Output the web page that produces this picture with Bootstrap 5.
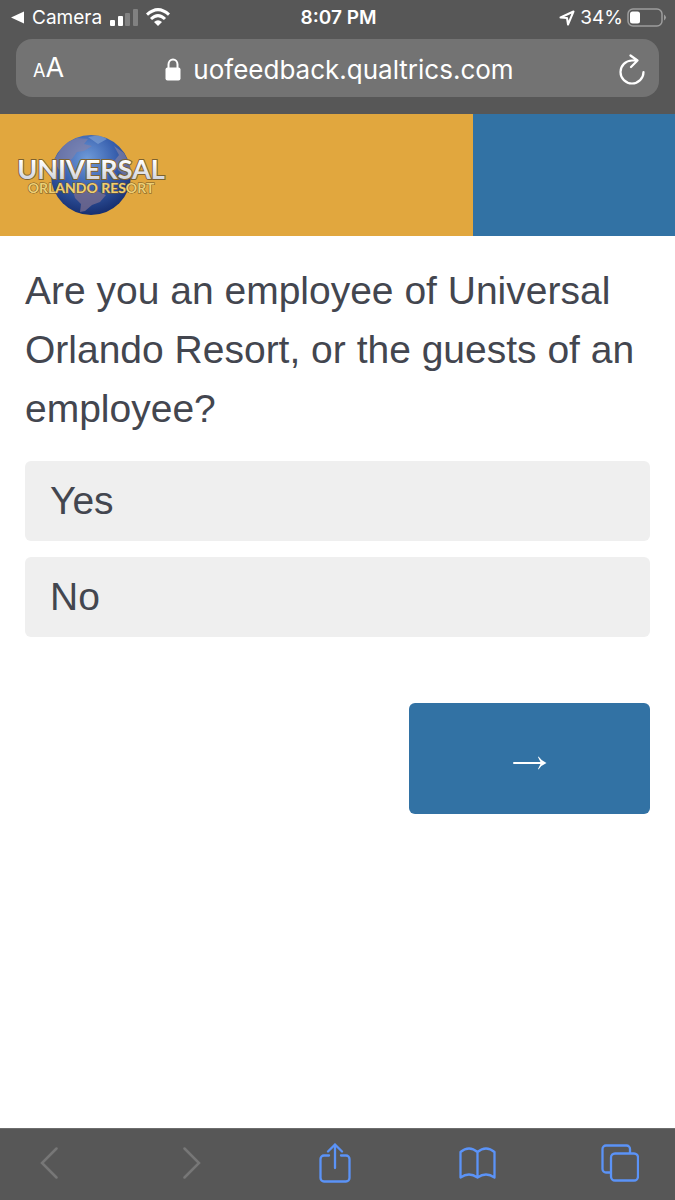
<!DOCTYPE html>
<html lang="en">
<head>
<meta charset="utf-8">
<meta name="viewport" content="width=device-width, initial-scale=1">
<title>Universal Orlando Resort Feedback</title>
<link href="https://cdn.jsdelivr.net/npm/bootstrap@5.3.0/dist/css/bootstrap.min.css" rel="stylesheet">
<style>
  body { font-family: "Liberation Sans", Arial, sans-serif; color: #43464f; background: #fff; }
  svg { display: block; flex: none; }
  .chrome { background: #575757; color: #fff; font-family: Inter, sans-serif; }
  .chrome a, .chrome button { color: inherit; text-decoration: none; }
  .plain { border: 0; background: none; padding: 0; }
  .status { height: 39px; padding: 0 8px 4px 10px; font-size: 19px; line-height: 24px; }
  .address { height: 58px; margin: 0 16px 17px; padding: 3px 13px 0 17px; border-radius: 16px; background: #737373; }
  .side { width: 36px; }
  .host { font-size: 26px; line-height: 36px; }
  .small-a { font-size: 18px; }
  .big-a { font-size: 27px; }
  .size-btn { line-height: 32px; }
  .banner { height: 122px; background: #3272a4; }
  .banner-brand { width: 70%; padding: 0 16px; background: #e1a73e; }
  .survey { padding: 25px 25px 24px; }
  .question { font-size: 39px; line-height: 59px; margin-bottom: 23px; }
  .choice { display: block; padding: 10px 25px 11px; border-radius: 6px; background: #efefef; font-size: 39px; line-height: 59px; cursor: pointer; }
  .btn-check:checked + .choice { background: #3272a4; color: #fff; }
  .btn-check:focus-visible + .choice { outline: 2px solid #3272a4; }
  .next { width: 241px; height: 111px; margin-top: 66px; padding: 8px 0 0; border: 0; border-radius: 6px; background: #3272a4; color: #fff; }
  .toolbar { height: 72px; padding: 0 36px 3px 30px; border-top: 1px solid #6d6d6d; }
  .toolbar button { width: 38px; height: 40px; color: #5b93f7; }
  .toolbar button:disabled { color: #777; }
</style>
</head>
<body class="d-flex flex-column min-vh-100">
<header class="chrome">
  <div class="status row g-0 align-items-center">
    <div class="col-4 d-flex align-items-center">
      <a href="#" class="d-flex align-items-center gap-2">
        <svg width="14" height="13" viewBox="0 0 14 13"><path d="M1 6.500 14 .5V12.500Z" fill="#fff"/></svg>
        <span>Camera</span>
      </a>
      <svg class="ms-2" width="28" height="18" viewBox="0 0 28 18" aria-label="Signal"><g fill="#fff"><rect y="11" width="5" height="6" rx="1"/><rect x="8" y="7" width="5" height="10" rx="1"/><g opacity=".25"><rect x="15" y="4" width="5" height="13" rx="1"/><rect x="23" width="5" height="17" rx="1"/></g></g></svg>
      <svg class="ms-2" width="24" height="19" viewBox="0 0 24 19" aria-label="Wi-Fi"><g fill="none" stroke="#fff" stroke-width="3"><path d="M1 6.700Q12-3.500 23 6.700"/><path d="M5 11Q12 4.300 19 11"/></g><path d="M8 14Q12 10.500 16 14L12 18Z" fill="#fff"/></svg>
    </div>
    <div class="col-4 text-center fw-semibold">8:07 PM</div>
    <div class="col-4 d-flex align-items-center justify-content-end gap-1">
      <svg width="17" height="16" viewBox="0 0 17 16"><path d="M1.500 7.500 14.500 1.500 9 14.500 8 8Z" fill="none" stroke="#fff" stroke-width="2" stroke-linejoin="round"/></svg>
      <span>34%</span>
      <svg width="40" height="20" viewBox="0 0 40 20" aria-label="Battery"><rect x="1" y="1" width="34" height="17" rx="5" fill="none" stroke="#9d9d9d" stroke-width="1.500"/><rect x="3" y="3.500" width="10" height="12" rx="2.500" fill="#fff"/><path d="M37 6.500Q41 9.500 37 12.500Z" fill="#9d9d9d"/></svg>
    </div>
  </div>
  <div class="address d-flex align-items-center justify-content-between">
    <button class="plain size-btn side text-nowrap text-start" type="button" aria-label="Text size"><span class="small-a">A</span><span class="big-a">A</span></button>
    <div class="d-flex align-items-center gap-2">
      <svg class="me-1" width="16" height="23" viewBox="0 0 16 23"><path d="M3.500 11V6.500a4.500 5 0 0 1 9 0V11" fill="none" stroke="#fff" stroke-width="2"/><rect x=".5" y="9.500" width="15" height="13" rx="2" fill="#fff"/></svg>
      <span class="host">uofeedback.qualtrics.com</span>
    </div>
    <button class="plain side d-flex justify-content-end" type="button" aria-label="Reload">
      <svg width="28" height="32" viewBox="0 0 28 32" fill="none" stroke="#fff" stroke-width="2.200" stroke-linecap="round" stroke-linejoin="round"><path d="M25.500 18A11.500 11.500 0 1 1 14 6.500h5.500M12.500 1.500l7 5-6.500 6.500"/></svg>
    </button>
  </div>
</header>

<div class="banner d-flex">
  <div class="banner-brand d-flex align-items-center">
    <svg width="152" height="82" viewBox="0 0 152 82" role="img" aria-label="Universal Orlando Resort">
      <defs>
        <radialGradient id="globe" cx=".45" cy=".3" r=".7"><stop offset="0" stop-color="#6f9bd9"/><stop offset=".5" stop-color="#3a62b0"/><stop offset="1" stop-color="#172f70"/></radialGradient>
        <linearGradient id="silver" x1="0" y1="0" x2="0" y2="1"><stop offset=".25" stop-color="#fff"/><stop offset="1" stop-color="#c5c8d3"/></linearGradient>
        <clipPath id="disc"><circle cx="75" cy="41" r="40"/></clipPath>
      </defs>
      <circle cx="75" cy="41" r="40" fill="url(#globe)"/>
      <g clip-path="url(#disc)">
        <path d="M38 26 48 10 61 4 72 5 68 10 76 12 68 17 61 18 56 25 49 28 43 36Z" fill="#8981a3" opacity=".6"/>
        <path d="M72 3 84 1 91 5 82 10Z" fill="#86a7d6" opacity=".6"/>
        <path d="M98 12 108 19 115 33 111 44 102 36 99 26 103 21Z" fill="#8c86a3" opacity=".6"/>
        <path d="M57 57 68 55 81 57 90 61 84 68 76 71 69 77 64 78 65 70 59 64Z" fill="#756b8e" opacity=".8"/>
      </g>
      <g font-family="Lato, sans-serif" text-anchor="middle">
        <text x="75" y="45" font-size="27" font-weight="700" fill="url(#silver)" stroke="#7d6230" stroke-width="2" paint-order="stroke">UNIVERSAL</text>
        <text x="75" y="59" font-size="14" font-weight="700" fill="#edcf75" stroke="#725726" stroke-width="1" paint-order="stroke">ORLANDO RESORT</text>
      </g>
    </svg>
  </div>
</div>

<main class="survey flex-grow-1">
  <form>
    <fieldset>
      <legend class="question">Are you an employee of Universal Orlando Resort, or the guests of an employee?</legend>
      <div class="d-grid gap-3">
        <div>
          <input class="btn-check" type="radio" name="employee" id="yes" value="yes">
          <label class="choice" for="yes">Yes</label>
        </div>
        <div>
          <input class="btn-check" type="radio" name="employee" id="no" value="no">
          <label class="choice" for="no">No</label>
        </div>
      </div>
    </fieldset>
    <div class="d-flex justify-content-end">
      <button class="next d-flex align-items-center justify-content-center" type="button" aria-label="Next">
        <svg width="34" height="14" viewBox="0 0 34 14"><path d="M1 7H29" stroke="#fff" stroke-width="2" stroke-linecap="round"/><path d="M25.500.5Q28.500 5 33.500 7 28.500 9 25.500 13.500L25 13 28 7 25 1Z" fill="#fff"/></svg>
      </button>
    </div>
  </form>
</main>

<nav class="chrome toolbar d-flex align-items-center justify-content-between" aria-label="Browser toolbar">
  <button class="plain d-flex align-items-center justify-content-center" type="button" disabled aria-label="Back"><svg width="18" height="32" viewBox="0 0 18 32"><path d="M16.500 1.500 2 16 16.500 30.500" fill="none" stroke="currentColor" stroke-width="2.500" stroke-linecap="round"/></svg></button>
  <button class="plain d-flex align-items-center justify-content-center" type="button" disabled aria-label="Forward"><svg width="18" height="32" viewBox="0 0 18 32"><path d="M1.500 1.500 16 16 1.500 30.500" fill="none" stroke="currentColor" stroke-width="2.500" stroke-linecap="round"/></svg></button>
  <button class="plain d-flex align-items-center justify-content-center" type="button" aria-label="Share"><svg width="32" height="40" viewBox="0 0 32 40" fill="none" stroke="currentColor" stroke-width="2.300" stroke-linecap="round" stroke-linejoin="round"><path d="M10 12.500H5a3.500 3.500 0 0 0-3.500 3.500v19A3.500 3.500 0 0 0 5 38.500h22a3.500 3.500 0 0 0 3.500-3.500V16a3.500 3.500 0 0 0-3.500-3.500h-5M16 25V1.500M9 8.500l7-7 7 7"/></svg></button>
  <button class="plain d-flex align-items-center justify-content-center" type="button" aria-label="Bookmarks"><svg width="37" height="32" viewBox="0 0 37 32" fill="none" stroke="currentColor" stroke-width="2.300" stroke-linejoin="round" stroke-linecap="round"><path d="M18.500 5Q10-2 1.500 5V30.500Q10 24.500 18.500 30.500 27 24.500 35.500 30.500V5Q27-2 18.500 5ZM18.500 5V30.500"/></svg></button>
  <button class="plain d-flex align-items-center justify-content-center" type="button" aria-label="Tabs"><svg width="38" height="38" viewBox="0 0 38 38" fill="none" stroke="currentColor" stroke-width="2.300"><rect x="10" y="9.500" width="27" height="27" rx="4"/><path d="M9.500 28.500H5A3.500 3.500 0 0 1 1.500 25V5A3.500 3.500 0 0 1 5 1.500h20.500A3.500 3.500 0 0 1 29 5v4"/></svg></button>
</nav>
<script src="https://cdn.jsdelivr.net/npm/bootstrap@5.3.0/dist/js/bootstrap.bundle.min.js"></script>
</body>
</html>
